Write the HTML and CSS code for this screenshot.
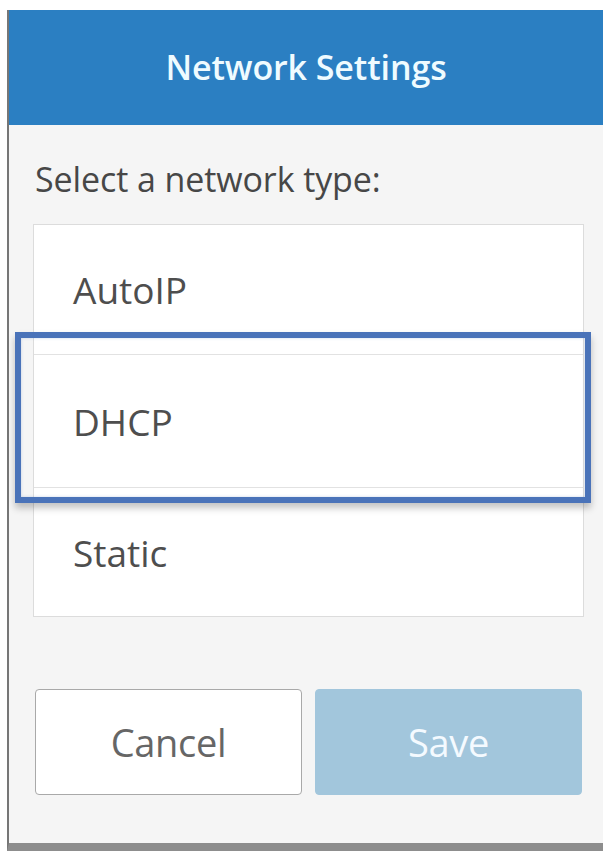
FILE: index.html
```html
<!DOCTYPE html>
<html lang="en">
<head>
<meta charset="utf-8">
<title>Network Settings</title>
<link rel="stylesheet" href="styles.css">
</head>
<body>
<div class="dialog">
  <header class="dialog-header">
    <h1 class="dialog-title">Network Settings</h1>
  </header>
  <div class="dialog-body">
    <p class="prompt">Select a network type:</p>
    <ul class="type-list">
      <li class="type-item item-auto">AutoIP</li>
      <li class="type-item item-dhcp is-selected">DHCP</li>
      <li class="type-item item-static">Static</li>
    </ul>
    <div class="actions">
      <button class="btn btn-cancel" type="button">Cancel</button>
      <button class="btn btn-save" type="button">Save</button>
    </div>
  </div>
</div>
</body>
</html>
```
FILE: styles.css
```css
html, body {
  margin: 0;
  padding: 0;
  background: #ffffff;
}
body {
  font-family: "Open Sans", "Noto Sans", "DejaVu Sans", sans-serif;
  color: #4a4a4a;
}
.dialog {
  margin: 10px 0 0 7px;
  width: 596px;
  height: 841px;
  box-sizing: border-box;
  border-left: 2px solid #767676;
  border-bottom: 8px solid #8d8d8d;
  background: #f5f5f5;
  display: flex;
  flex-direction: column;
}
.dialog-header {
  height: 115px;
  flex: none;
  background: #2b7fc2;
  display: flex;
  align-items: center;
  justify-content: center;
}
.dialog-title {
  margin: 0 0 1px 0;
  font-size: 34px;
  font-weight: 600;
  color: #effbff;
  letter-spacing: -0.1px;
}
.dialog-body {
  flex: 1;
  padding: 0 19px 0 24px;
  display: flex;
  flex-direction: column;
}
.prompt {
  margin: 34px 0 0 2px;
  font-size: 34px;
  line-height: 40px;
  color: #474747;
  letter-spacing: -0.1px;
}
.type-list {
  list-style: none;
  margin: 25px 0 0 0;
  padding: 0;
  background: #ffffff;
  border: 1px solid #dcdcdc;
}
.type-item {
  display: flex;
  align-items: center;
  padding-left: 39px;
  font-size: 37px;
  color: #4e4e4e;
  box-sizing: border-box;
}
.item-auto {
  height: 129px;
}
.item-dhcp {
  height: 134px;
  border-top: 1px solid #e2e2e2;
  border-bottom: 1px solid #e2e2e2;
}
.item-static {
  height: 128px;
}
.is-selected {
  position: relative;
}
.is-selected::after {
  content: "";
  position: absolute;
  left: -19px;
  right: -8px;
  top: -23px;
  bottom: -16px;
  border: 6px solid #4a73b9;
  box-shadow: 0 5px 7px rgba(0, 0, 0, 0.24), inset 0 0 3px rgba(74, 115, 185, 0.3);
  pointer-events: none;
}
.actions {
  display: flex;
  gap: 13px;
  margin: 72px 2px 0 2px;
}
.btn {
  flex: 1;
  height: 106px;
  border-radius: 4px;
  font-family: inherit;
  font-size: 38px;
  letter-spacing: -0.3px;
  cursor: pointer;
}
.btn-cancel {
  background: #ffffff;
  border: 1px solid #a9a9a9;
  color: #666666;
}
.btn-save {
  background: #a2c6dc;
  border: 1px solid #a2c6dc;
  color: #f4faff;
}
```
